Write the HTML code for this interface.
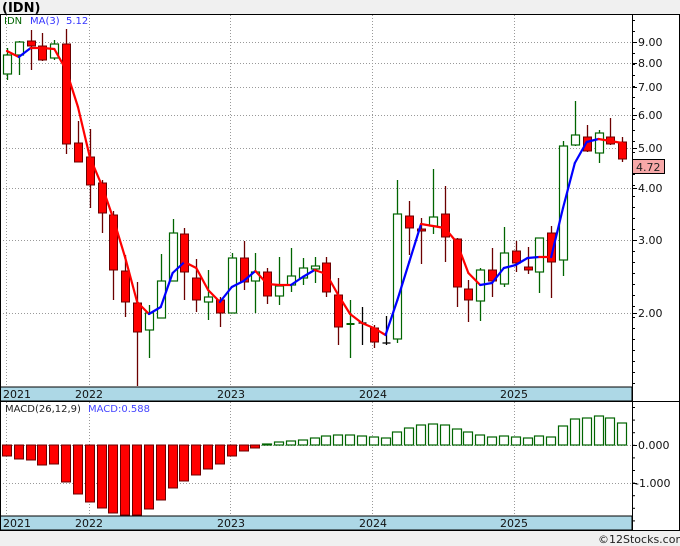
<!DOCTYPE html>
<html><head><meta charset="utf-8"><style>
html,body{margin:0;padding:0;background:#f0f0f0;}
#w{position:relative;width:680px;height:546px;overflow:hidden;font-family:"Liberation Sans","DejaVu Sans",sans-serif;}
svg text{font-family:"DejaVu Sans","Liberation Sans",sans-serif;}
</style></head><body><div id="w">
<svg id="s" width="680" height="546" viewBox="0 0 680 546" xmlns="http://www.w3.org/2000/svg">
<rect x="0" y="0" width="680" height="546" fill="#f0f0f0"/>
<rect x="0" y="14" width="680" height="516" fill="#fff"/>
<text x="2" y="12" font-size="13" font-weight="bold" fill="#000">(IDN)</text>
<g id="grid" stroke="#999" stroke-dasharray="1,2" stroke-width="1"></g>
<g id="plot"></g>
<rect x="0" y="387" width="632" height="14" fill="#add8e6" stroke="#000" stroke-width="1"/>
<rect x="0" y="516" width="632" height="14" fill="#add8e6" stroke="#000" stroke-width="1"/>
<g font-size="11" fill="#111">
<text x="3" y="398">2021</text><text x="75" y="398">2022</text><text x="217" y="398">2023</text><text x="359" y="398">2024</text><text x="500" y="398">2025</text>
<text x="3" y="527">2021</text><text x="75" y="527">2022</text><text x="217" y="527">2023</text><text x="359" y="527">2024</text><text x="500" y="527">2025</text>
</g>
<line x1="0" y1="14.5" x2="680" y2="14.5" stroke="#000"/>
<line x1="0" y1="401.5" x2="680" y2="401.5" stroke="#000"/>
<line x1="0" y1="530.5" x2="680" y2="530.5" stroke="#000"/>
<line x1="632.5" y1="14" x2="632.5" y2="530" stroke="#000"/>
<line x1="0.5" y1="14" x2="0.5" y2="530" stroke="#000"/>
<line x1="679.5" y1="14" x2="679.5" y2="530" stroke="#000"/>
<g id="ticks" stroke="#000"></g>
<g font-size="11" fill="#111">
<text x="638" y="46">9.00</text><text x="638" y="67">8.00</text><text x="638" y="91">7.00</text><text x="638" y="119">6.00</text><text x="638" y="152">5.00</text><text x="638" y="192">4.00</text><text x="638" y="244">3.00</text><text x="638" y="317">2.00</text>
<text x="638" y="449">0.000</text><text x="635" y="487">-1.000</text>
</g>
<rect x="632.5" y="159.5" width="32" height="14" fill="#f7a8a8" stroke="#000"/>
<text x="636" y="171" font-size="11" fill="#222">4.72</text>
<text x="4" y="24" font-size="10" fill="#006400">IDN</text>
<text x="30" y="24" font-size="10" fill="#3333ff">MA(3)</text>
<text x="66" y="24" font-size="10" fill="#3333ff">5.12</text>
<text x="5" y="412" font-size="10" fill="#222">MACD(26,12,9)</text>
<text x="88" y="412" font-size="10" fill="#4444ff">MACD:0.588</text>
<text x="598" y="543" font-size="11" fill="#222">©12Stocks.com</text>
</svg>
<script>
var NS="http://www.w3.org/2000/svg";
function el(p,t,a){var e=document.createElementNS(NS,t);for(var k in a)e.setAttribute(k,a[k]);p.appendChild(e);return e;}
var g=document.getElementById('grid'),P=document.getElementById('plot'),T=document.getElementById('ticks');
[42,63,87,115,148,188,240,313].forEach(function(y){el(g,'line',{x1:0,y1:y+.5,x2:632,y2:y+.5});el(T,'line',{x1:632,y1:y+.5,x2:637,y2:y+.5});});
[445,483].forEach(function(y){el(g,'line',{x1:0,y1:y+.5,x2:632,y2:y+.5});el(T,'line',{x1:632,y1:y+.5,x2:637,y2:y+.5});});
[6,89,230,372,514].forEach(function(x){el(g,'line',{x1:x+.5,y1:15,x2:x+.5,y2:387});el(g,'line',{x1:x+.5,y1:402,x2:x+.5,y2:516});});
for(var y=20;y<386;y+=11){el(T,'line',{x1:632,y1:y+.5,x2:635,y2:y+.5});}
for(var y=407;y<530;y+=12.6){el(T,'line',{x1:632,y1:y+.5,x2:635,y2:y+.5});}
var C=[['g',55,74,48,80],['g',42,55,41,75],['r',41,46,30,70],['r',46,60,33,61],['g',44,58,40,60],['r',44,144,29,154],
['r',143,162,121,162],['r',157,185,129,208],['r',183,213,180,233],['r',215,270,211,300],['r',271,302,255,317],['r',303,332,282,386],
['g',313,330,305,358],['g',281,318,254,318],['g',233,281,219,281],['r',234,272,228,300],['r',278,300,259,312],['g',297,302,270,320],
['r',300,313,297,327],['g',258,313,253,313],['r',258,282,241,290],['g',272,281,253,313],['r',272,296,268,304],['g',286,296,257,305],
['g',276,285,248,292],['g',268,278,258,285],['g',266,269,257,283],['r',263,292,257,297],['r',295,327,278,345],['d',324,326,300,358],
['k',323,323,307,345],['r',328,342,325,348],['k',343,343,316,345],['g',214,339,180,343],['r',216,228,201,255],['r',229,231,218,264],
['g',217,226,169,234],['r',214,237,186,262],['r',239,287,238,307],['r',289,300,280,322],['g',270,301,268,321],['r',270,281,248,297],
['g',253,284,227,287],['r',251,263,241,272],['r',267,270,247,274],['g',238,272,238,293],['r',233,262,226,298],['g',146,260,141,276],
['g',135,145,101,146],['r',137,151,125,152],['g',133,153,130,163],['r',137,144,118,145],['r',142,159,137,162]];
var MA=[51,57,48,48,49,70,107,157,185,219,258,302,314,307,273,262,268,290,302,287,281,271,284,285,285,277,270,274,295,314,323,328,335,300,262,224,226,228,242,273,285,283,268,265,258,257,257,208,163,142,139,141,143];
var M=[456,459,460,465,464,482,494,502,508,513,515,515,509,500,488,481,475,469,464,456,451,448,444,442,441,440,438,436,435,435,436,437,438,432,428,425,424,425,429,432,435,437,436,437,438,436,437,426,419,418,416,418,423];
function X(i){return 7+11.83*i;}
C.forEach(function(c,i){var x=Math.round(X(i))+.5,t=c[0];
 var wc=t=='r'?'#6b0000':(t=='k'?'#000':'#006400');
 el(P,'line',{x1:x,y1:c[3],x2:x,y2:c[4],stroke:wc,'stroke-width':1.3});
 if(t=='g')el(P,'rect',{x:x-4,y:c[1],width:8,height:Math.max(1,c[2]-c[1]),fill:'#fff',stroke:'#006400','stroke-width':1.2});
 else if(t=='r')el(P,'rect',{x:x-4,y:c[1],width:8,height:Math.max(1,c[2]-c[1]),fill:'#f00',stroke:'#6b0000','stroke-width':1});
 else el(P,'line',{x1:x-4,y1:c[1],x2:x+4,y2:c[1],stroke:wc,'stroke-width':t=='d'?2:1.3});
});
for(var i=0;i<MA.length-1;i++){el(P,'line',{x1:X(i),y1:MA[i],x2:X(i+1),y2:MA[i+1],stroke:MA[i+1]<MA[i]?'#0000ff':'#ff0000','stroke-width':2.2,'stroke-linecap':'round'});}
M.forEach(function(v,i){var x=Math.round(X(i))-4.5;
 if(v>445)el(P,'rect',{x:x,y:445,width:9,height:v-445,fill:'#f00',stroke:'#6b0000','stroke-width':1});
 else el(P,'rect',{x:x,y:v,width:9,height:Math.max(1,445-v),fill:'#fff',stroke:'#006400','stroke-width':1.2});
});
</script>
</div></body></html>
